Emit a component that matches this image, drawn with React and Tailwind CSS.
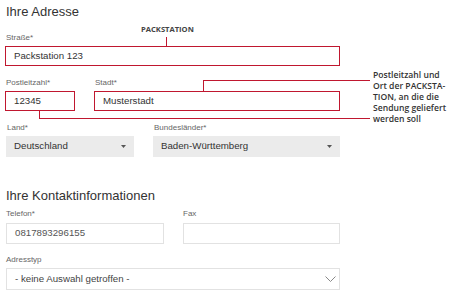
import React from "react";

// small form labels above each field
function Label({ children }) {
  return (
    <div className="text-[8px] leading-[10px] text-[#666] mb-[3px] pl-px">
      {children}
    </div>
  );
}

function RedInput({ value, className = "" }) {
  return (
    <div
      className={`h-[20px] flex items-center pl-[8px] border-[1.5px] border-[#c0172f] text-[9.7px] text-[#333] ${className}`}
    >
      {value}
    </div>
  );
}

function GraySelect({ value, className = "" }) {
  return (
    <div
      className={`h-[21px] flex items-center justify-between pl-[8px] pr-[8px] bg-[#ebebeb] text-[9.7px] text-[#333] ${className}`}
    >
      <span>{value}</span>
      <svg width="5" height="3" viewBox="0 0 5 3">
        <path d="M0 0h5L2.5 3z" fill="#555" />
      </svg>
    </div>
  );
}

function PlainInput({ value, className = "" }) {
  return (
    <div
      className={`h-[21px] flex items-center pl-[8px] border border-[#e2e2e2] text-[9.7px] text-[#555] ${className}`}
    >
      {value}
    </div>
  );
}

export default function App() {
  return (
    <div className="relative w-[450px] h-[300px] bg-white overflow-hidden font-['Liberation_Sans',Arial,sans-serif]">
      <div className="pl-[5px] w-[340px]">
        <h2 className="mt-px h-[22px] leading-[22px] text-[13px] text-[#333] pl-px">
          Ihre Adresse
        </h2>

        <div className="mt-[10px]">
          <Label>Straße*</Label>
          <RedInput value="Packstation 123" />
        </div>

        <div className="mt-[12px] flex gap-[19px]">
          <div className="w-[70px]">
            <Label>Postleitzahl*</Label>
            <RedInput value="12345" />
          </div>
          <div className="flex-1">
            <Label>Stadt*</Label>
            <RedInput value="Musterstadt" />
          </div>
        </div>

        <div className="mt-[12px] flex gap-[19px] pl-px">
          <div className="w-[128px]">
            <Label>Land*</Label>
            <GraySelect value="Deutschland" />
          </div>
          <div className="flex-1">
            <Label>Bundesländer*</Label>
            <GraySelect value="Baden-Württemberg" />
          </div>
        </div>

        <h2 className="mt-[28px] h-[22px] leading-[22px] text-[13px] text-[#333] pl-px">
          Ihre Kontaktinformationen
        </h2>

        <div className="mt-[2px] flex gap-[19px] pl-px">
          <div className="w-[158px]">
            <div className="text-[8px] leading-[10px] text-[#666] mb-[4px]">Telefon*</div>
            <PlainInput value="0817893296155" />
          </div>
          <div className="flex-1">
            <div className="text-[8px] leading-[10px] text-[#666] mb-[4px]">Fax</div>
            <PlainInput value="" />
          </div>
        </div>

        <div className="mt-[11px] pl-px">
          <div className="text-[8px] leading-[10px] text-[#666] mb-[3px]">Adresstyp</div>
          <div className="h-[22px] flex items-center justify-between pl-[8px] pr-[3px] border border-[#e2e2e2] text-[9.7px] text-[#444]">
            <span>- keine Auswahl getroffen -</span>
            <svg width="11" height="6" viewBox="0 0 11 6">
              <path d="M0.5 0.5L5.5 5.5L10.5 0.5" stroke="#888" fill="none" />
            </svg>
          </div>
        </div>
      </div>

      {/* annotation overlay */}
      <div className="absolute left-[141px] top-[24px] text-[7.6px] leading-[10px] font-bold text-[#444] font-['Open_Sans',sans-serif]">
        PACKSTATION
      </div>
      <div className="absolute left-[166px] top-[37px] w-px h-[9px] bg-[#c0172f]" />

      <div className="absolute left-[203px] top-[80px] w-px h-[11px] bg-[#c0172f]" />
      <div className="absolute left-[203px] top-[80px] w-[167px] h-px bg-[#c0172f]" />

      <div className="absolute left-[39px] top-[111px] w-px h-[7px] bg-[#c0172f]" />
      <div className="absolute left-[39px] top-[118px] w-[331px] h-px bg-[#c0172f]" />

      <div className="absolute left-[373px] top-[70px] text-[8.6px] leading-[11px] font-semibold text-[#333] font-['Open_Sans',sans-serif]">
        Postleitzahl und
        <br />
        Ort der PACKSTA-
        <br />
        TION, an die die
        <br />
        Sendung geliefert
        <br />
        werden soll
      </div>
    </div>
  );
}
